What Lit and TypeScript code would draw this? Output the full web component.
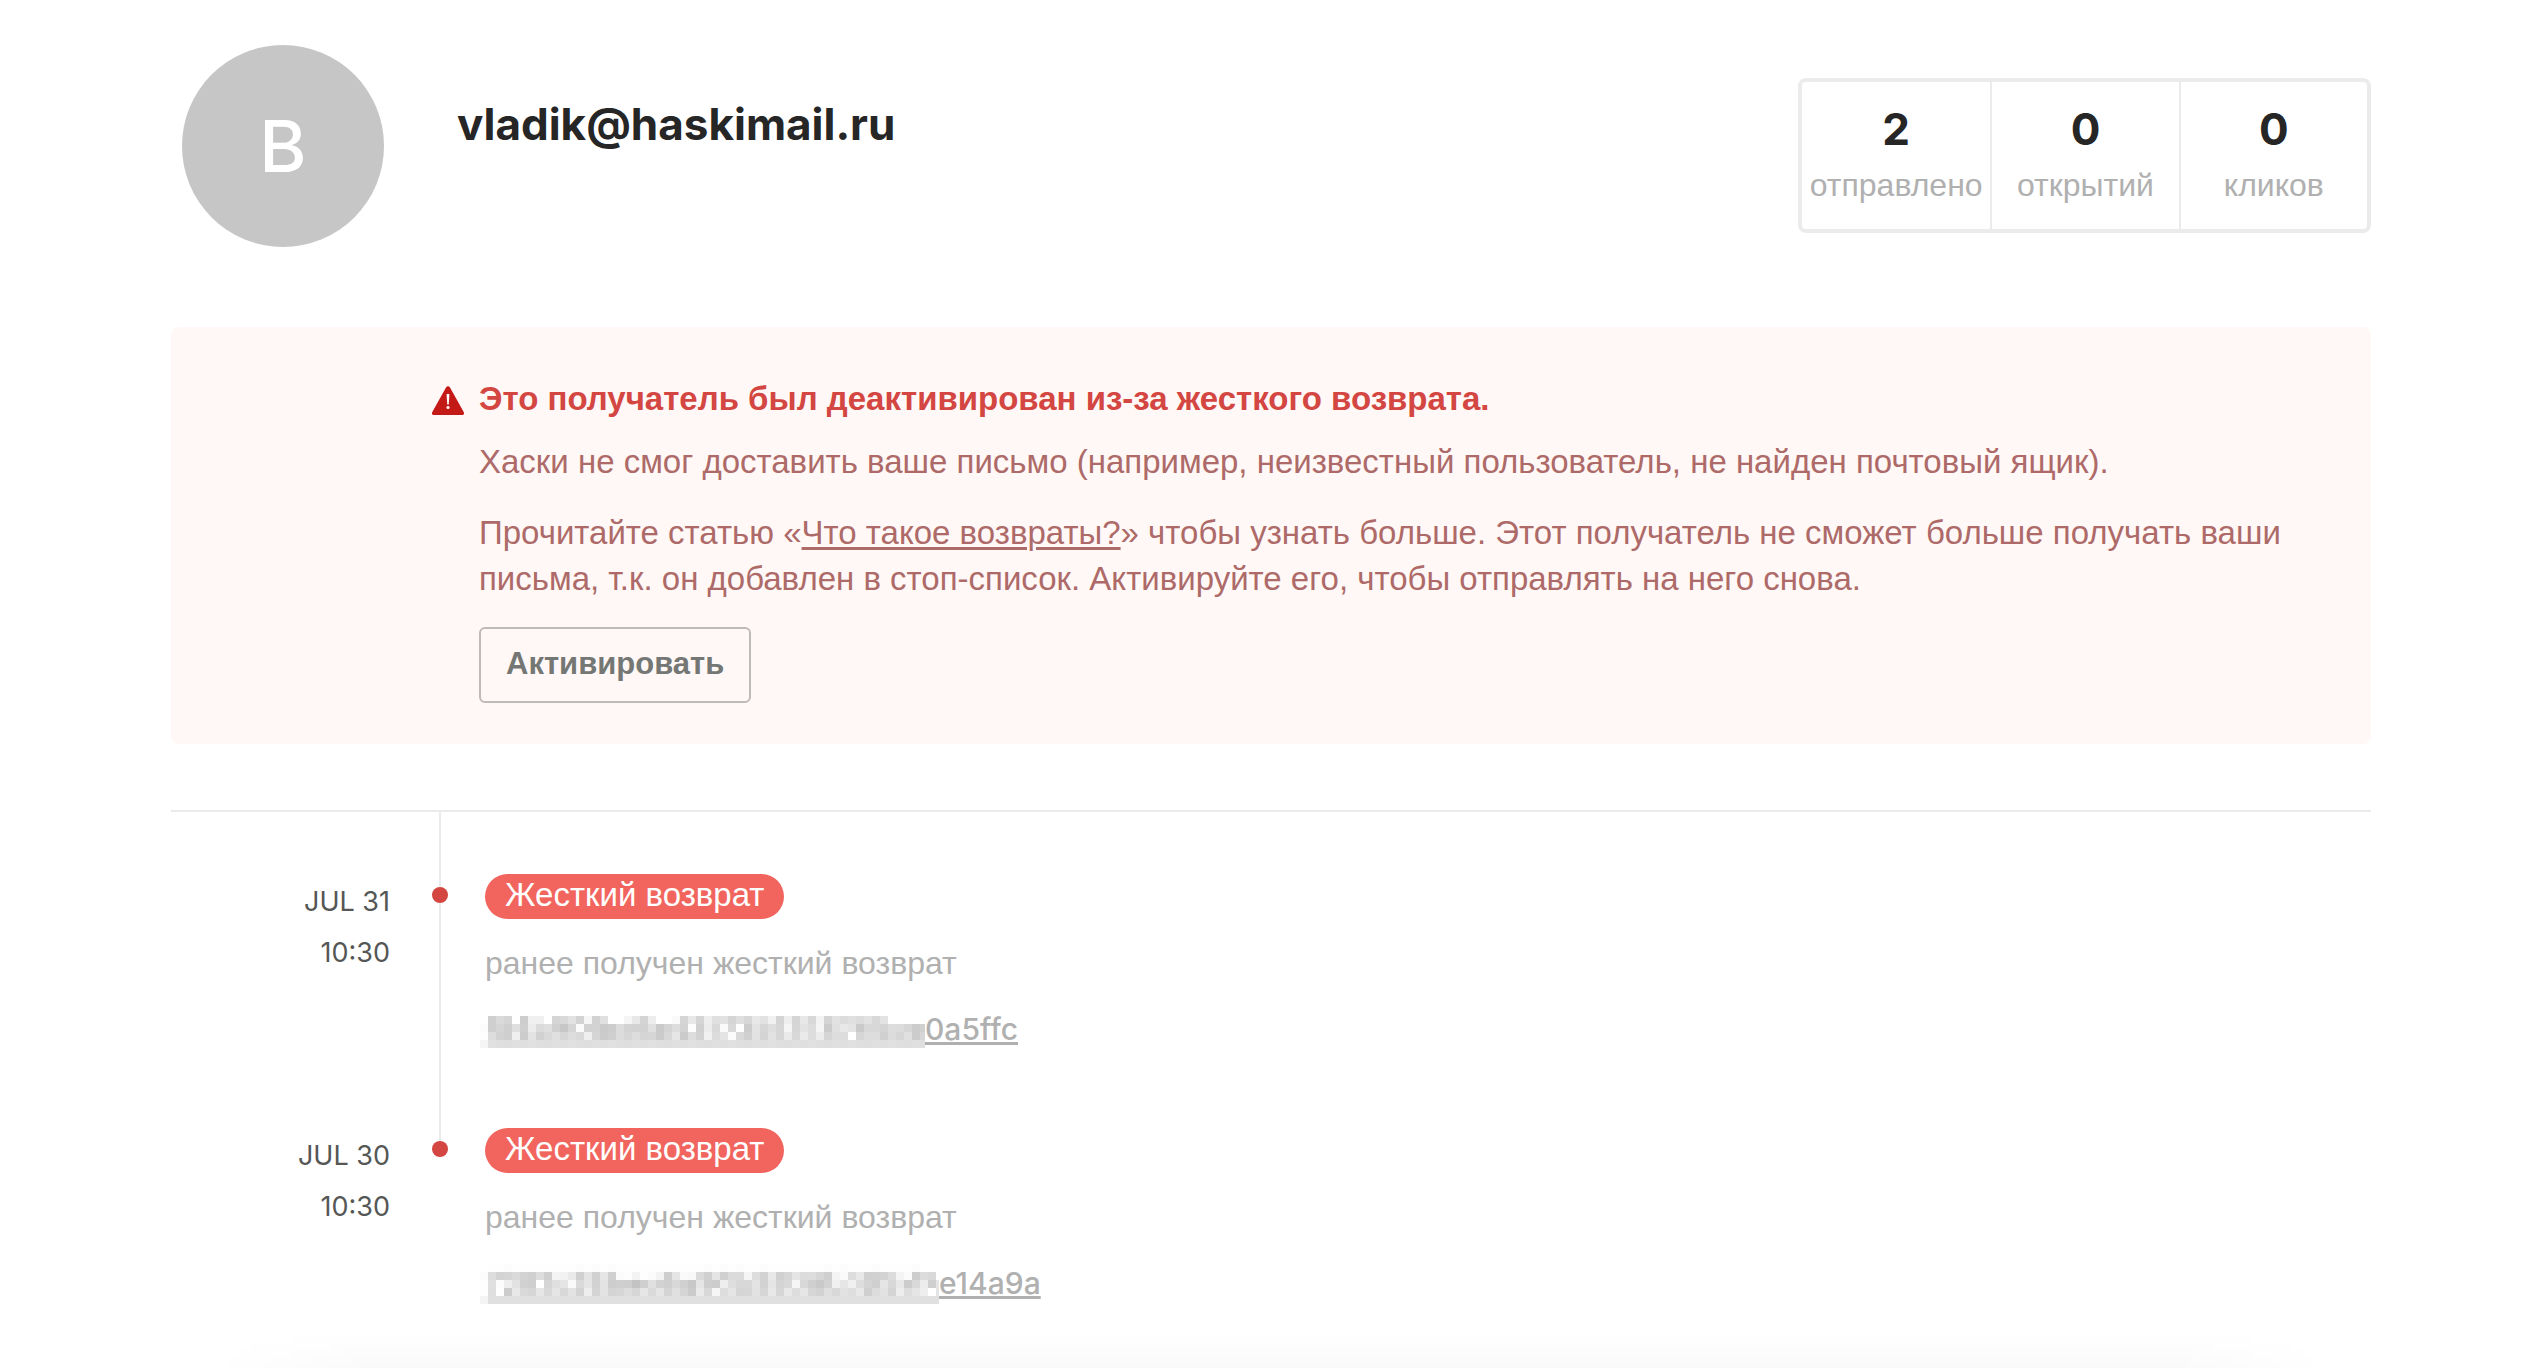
import { LitElement, html, svg, css } from "lit";
import { customElement, property } from "lit/decorators.js";

interface Stat {
  value: number;
  label: string;
}

interface Bounce {
  day: string;
  time: string;
  kind: string;
  note: string;
  tail: string;
  maskTop: number;
  maskWidth: number;
  mask: string[];
}

const CELL = 8;

const STATS: Stat[] = [
  { value: 2, label: "отправлено" },
  { value: 0, label: "открытий" },
  { value: 0, label: "кликов" },
];

/* Every mask row lists one two-digit grey level per 8px cell. */
const BOUNCES: Bounce[] = [
  {
    day: "JUL 31",
    time: "10:30",
    kind: "Жесткий возврат",
    note: "ранее получен жесткий возврат",
    tail: "0a5ffc",
    maskTop: 10,
    maskWidth: 445,
    mask: [
      "ffcfdad5ffcdf0f0ffd5d9e2d3f6d2e0fffff5e8d4edfffffad5e8d5eee0e2d5dfd7e8e2f1d4eed5e8d8f3d4e2dce0dce2d8e3",
      "fccfd5cfdfcfecdbdfd0c7d5fbd2d3cacddcd3d2d2e0cad4ddd3fdd0ecd9fad9fecce3d6ded6f5d6e3ddf5cbe0e8e4cad8d8d4dddcd6ccd0",
      "feddd2cfefcce3d1d9e0d6ddd9efd5cbcfdcd6ddd5d6cbd8e6cbddd2f1dce4fbd9d0e2d4e2d6ead8eaddecd5ddddffd6ddddd0dcd6e0ccd6",
      "f5" + "e1dfdee0df".repeat(11),
    ],
  },
  {
    day: "JUL 30",
    time: "10:30",
    kind: "Жесткий возврат",
    note: "ранее получен жесткий возврат",
    tail: "e14a9a",
    maskTop: 4,
    maskWidth: 459,
    mask: [
      "fffefefcfefefefefefefefefcfefcfefcfefefefefefefefefefefefcfefcfefcfefefcfefefefefefefefcfefcfefefefcfefefefefc",
      "fcddd3d5dad3d0ddcff4f2ead0e4d1e6d0fbfdf3fefbf3cee5faf8dad0e5d0dbdbf5ddd2e8d0d6e5dcddd6cff4fadde8d0d1d3dcf4fbcddcd9",
      "fee0fceee2d1cfffd5dfe5fadae5d2e3cdcfcec3cfe0d2cfd8d0c8e5cecceeded8d8e3d2e5d4d8f5d8cfc9d2f0e6f0ddd4cfe5d8e8ccd9eccfe5",
      "fedffecce8d9d6e6d8e5d8e3d3eed4e3d4d6ddd6e6dae5d4e0d5cbead8f6dde5d5d6e2d6e8d6e8dde6d6d2dfd8e2dee8cfdce2d4eddde5eeffe4",
      "f4" + "e0".repeat(57),
    ],
  },
];

const shades = (row: string): string[] => row.match(/../g) ?? [];

@customElement("recipient-stats")
class RecipientStats extends LitElement {
  @property({ attribute: false }) items: Stat[] = [];

  static styles = css`
    :host {
      display: block;
    }
    .box {
      display: grid;
      grid-template-columns: repeat(3, 1fr);
      margin: 0;
      border: 4px solid #ebebeb;
      border-radius: 8px;
    }
    .stat {
      display: flex;
      flex-direction: column-reverse;
      gap: 10px;
      padding: 21px 0 24px;
      text-align: center;
    }
    .stat + .stat {
      border-left: 2px solid #ebebeb;
    }
    .label {
      color: #b0b0b0;
      font-size: 32px;
      line-height: 40px;
    }
    .value {
      margin: 0;
      color: #262626;
      font: 700 44px/52px Inter, "Liberation Sans", sans-serif;
    }
  `;

  render() {
    return html`<dl class="box">
      ${this.items.map(
        (s) => html`<div class="stat">
          <dt class="label">${s.label}</dt>
          <dd class="value">${s.value}</dd>
        </div>`
      )}
    </dl>`;
  }
}

@customElement("bounce-alert")
class BounceAlert extends LitElement {
  static styles = css`
    :host {
      display: block;
    }
    .panel {
      display: grid;
      grid-template-columns: 32px 1fr;
      column-gap: 15px;
      padding: 49px 48px 41px 261px;
      border-radius: 8px;
      background: #fff8f6;
      color: #ad6a68;
      font-size: 33px;
      line-height: 46px;
    }
    .icon {
      display: block;
      width: 32px;
      height: 29px;
      margin-top: 10px;
    }
    .title {
      margin: 0 0 17px;
      color: #d34642;
      font-size: 33px;
      font-weight: 700;
      line-height: 46px;
    }
    .text {
      margin: 0 0 25px;
    }
    .link {
      color: inherit;
      text-decoration-thickness: 3px;
      text-underline-offset: 3px;
    }
    .action {
      display: block;
      padding: 16px 25px 18px;
      border: 2px solid #bdbab8;
      border-radius: 6px;
      background: transparent;
      color: #747774;
      font: 700 31px/38px "Liberation Sans", sans-serif;
      cursor: pointer;
    }
  `;

  render() {
    return html`<section class="panel" role="alert">
      <svg class="icon" viewBox="0 0 32 29" aria-hidden="true">
        <path
          fill="#c31a17"
          d="M14 1.500C15-.3 17-.3 18 1.500L31.700 26C32.500 27.600 31.700 29 30 29H2C.3 29-.5 27.600.3 26Z"
        />
        <path fill="#fff8f6" d="M14.600 8H17.400L16.800 18.500H15.200Z" />
        <circle cx="16" cy="21.500" r="1.600" fill="#fff8f6" />
      </svg>
      <div>
        <h2 class="title">Это получатель был деактивирован из-за жесткого возврата.</h2>
        <p class="text">
          Хаски не смог доставить ваше письмо (например, неизвестный пользователь, не найден почтовый ящик).
        </p>
        <p class="text">
          Прочитайте статью «<a class="link" href="#bounces">Что такое возвраты?</a>» чтобы узнать больше. Этот
          получатель не сможет больше получать ваши письма, т.к. он добавлен в стоп-список. Активируйте его, чтобы
          отправлять на него снова.
        </p>
        <button class="action" type="button">Активировать</button>
      </div>
    </section>`;
  }
}

@customElement("bounce-timeline")
class BounceTimeline extends LitElement {
  @property({ attribute: false }) items: Bounce[] = [];

  static styles = css`
    :host {
      display: block;
    }
    .list {
      margin: 0;
      padding: 0;
      border-top: 2px solid #ebebeb;
      list-style: none;
    }
    .row {
      display: grid;
      grid-template-columns: 219px 16px 1fr;
    }
    .date {
      display: flex;
      flex-direction: column;
      padding-top: 64px;
      color: #555756;
      font: 400 27px/51px Inter, "Liberation Sans", sans-serif;
      text-align: right;
    }
    .rail {
      display: flex;
      flex-direction: column;
      align-items: center;
      margin-left: 42px;
      width: 16px;
    }
    .lead {
      width: 2px;
      height: 75px;
      background: #ebebeb;
    }
    .dot {
      width: 16px;
      height: 16px;
      border-radius: 50%;
      background: #d34642;
    }
    .rest {
      flex: 1;
      width: 2px;
      background: #ebebeb;
    }
    .row:last-child .rest {
      display: none;
    }
    .body {
      margin-left: 79px;
      padding: 62px 0 14px;
    }
    .pill {
      display: inline-block;
      padding: 0 20px 3px;
      border-radius: 23px;
      background: #f1655e;
      color: #fff;
      font-size: 33px;
      line-height: 42px;
      vertical-align: top;
    }
    .note {
      margin: 21px 0 20px;
      color: #b0b0b0;
      font-size: 32px;
      line-height: 46px;
    }
    .message {
      display: flex;
      margin-left: -5px;
      color: #b0b0b0;
      font: 500 30px/46px Inter, "Liberation Sans", sans-serif;
      text-decoration: none;
    }
    .mask {
      display: block;
      flex: none;
    }
    .tail {
      text-decoration: underline;
      text-decoration-thickness: 3px;
      text-underline-offset: 2px;
      text-decoration-skip-ink: none;
    }
  `;

  private mask(item: Bounce) {
    return html`<svg
      class="mask"
      width=${item.maskWidth}
      height="46"
      shape-rendering="crispEdges"
      aria-hidden="true"
    >
      ${item.mask.map((row, r) =>
        shades(row).map(
          (g, c) => svg`<rect
            x=${c * CELL}
            y=${item.maskTop + r * CELL}
            width=${CELL}
            height=${CELL}
            fill=${`#${g}${g}${g}`}
          ></rect>`
        )
      )}
    </svg>`;
  }

  render() {
    return html`<ol class="list">
      ${this.items.map(
        (b) => html`<li class="row">
          <time class="date"><span>${b.day}</span><span>${b.time}</span></time>
          <div class="rail"><i class="lead"></i><i class="dot"></i><i class="rest"></i></div>
          <div class="body">
            <span class="pill">${b.kind}</span>
            <p class="note">${b.note}</p>
            <a class="message" href="#message">${this.mask(b)}<span class="tail">${b.tail}</span></a>
          </div>
        </li>`
      )}
    </ol>`;
  }
}

@customElement("app-root")
class AppRoot extends LitElement {
  static styles = css`
    :host {
      display: block;
      background: #fff;
      font-family: "Liberation Sans", Arial, sans-serif;
    }
    .page {
      padding: 45px 176px 0 171px;
    }
    .head {
      display: flex;
      align-items: flex-start;
      padding-left: 11px;
      margin-bottom: 80px;
    }
    .avatar {
      display: grid;
      place-items: center;
      flex: none;
      width: 202px;
      height: 202px;
      border-radius: 50%;
      background: #c6c6c6;
      color: #fff;
      font: 500 72px/88px Inter, "Liberation Sans", sans-serif;
    }
    .email {
      flex: 1;
      margin: 53px 0 0 73px;
      color: #262626;
      font: 700 44px/52px Inter, "Liberation Sans", sans-serif;
    }
    .stats {
      flex: none;
      width: 573px;
      margin-top: 33px;
    }
    .alert {
      margin-bottom: 66px;
    }
    .fade {
      height: 36px;
      margin: 12px 40px 0;
      background: linear-gradient(rgba(0, 0, 0, 0), rgba(0, 0, 0, 0.02));
      mask-image: linear-gradient(90deg, transparent, #000 160px, #000 calc(100% - 160px), transparent);
    }
  `;

  render() {
    return html`<main class="page">
      <header class="head">
        <div class="avatar">B</div>
        <h1 class="email">vladik@haskimail.ru</h1>
        <recipient-stats class="stats" .items=${STATS}></recipient-stats>
      </header>
      <bounce-alert class="alert"></bounce-alert>
      <bounce-timeline .items=${BOUNCES}></bounce-timeline>
      <div class="fade"></div>
    </main>`;
  }
}
